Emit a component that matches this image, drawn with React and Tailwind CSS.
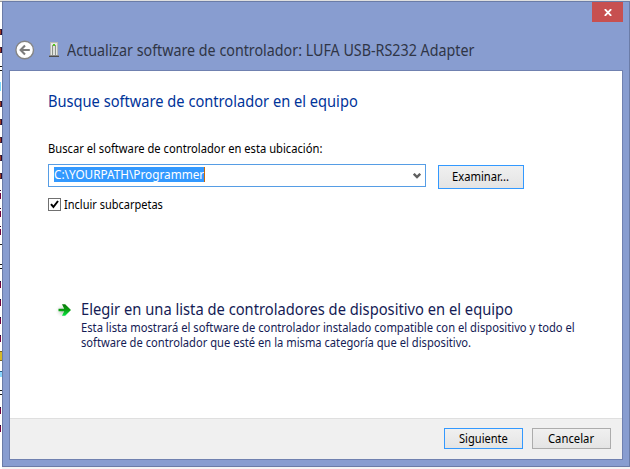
import { useLayoutEffect, useRef, useState } from "react";

// Renders one line of text condensed or stretched to the given width.
function Line({ width, className = "", children }) {
  const ref = useRef(null);
  const [scale, setScale] = useState(1);
  useLayoutEffect(() => {
    if (ref.current) setScale(width / ref.current.offsetWidth);
  }, [width]);
  return (
    <div className={`whitespace-nowrap ${className}`} style={{ width }}>
      <span ref={ref} className="inline-block origin-left" style={{ transform: `scaleX(${scale})` }}>
        {children}
      </span>
    </div>
  );
}

const strip = [
  "d", "d", "e", "c", "d", "d", "d", "d", "d", "i", "i", "i",
  "t", "e", "s", "l", "l", "f", "y", "r", "e", "n", "n",
];

function Mark({ kind }) {
  if (kind === "c") return <div className="h-[9px] w-px bg-[#79d8ff]" />;
  if (kind === "y") return <div className="h-[10px] w-[2px] border-y border-[#7a6420] bg-[#d8b928]" />;
  if (kind === "e") return <div className="h-[5px] w-[2px] border-y border-[#151515]" />;
  if (kind === "t") return <div className="mb-2 h-px w-[2px] bg-[#222222]" />;
  if (kind === "r") return <div className="h-[6px] w-[2px] border-t border-[#236090] bg-[#8bd8ff]" />;
  if (kind === "i")
    return (
      <div className="flex flex-col gap-[2px]">
        <div className="h-px w-px bg-[#35002e]" />
        <div className="h-[6px] w-px bg-[#71003b]" />
      </div>
    );
  if (kind === "d") return <div className="h-[6px] w-[2px] border-y border-l border-y-[#151540] border-l-[#9e3a20] bg-[#2b0a35]" />;
  return <div className="h-[7px] w-px border-t border-[#101040] bg-[#71003b]" />;
}

function Button({ className, width, children }) {
  return (
    <button
      className={`flex justify-center border bg-linear-to-b from-[#f0f0f0] to-[#e4e4e4] text-[12px] leading-[15px] text-black ${className}`}
    >
      <Line width={width}>{children}</Line>
    </button>
  );
}

function BackIcon() {
  return (
    <svg width="20" height="20" viewBox="0 0 20 20" className="shrink-0">
      <circle cx="9.7" cy="10" r="8.8" fill="#fff" stroke="#858585" strokeWidth="1.4" />
      <path d="M14.8 10H6M10 5.6 5.6 10l4.4 4.4" fill="none" stroke="#7c7c7c" strokeWidth="2.1" />
    </svg>
  );
}

function DeviceIcon() {
  return (
    <svg width="10" height="15" viewBox="0 0 10 15" className="shrink-0" shapeRendering="crispEdges">
      <path d="M1 0h8v14H1z" fill="#b9bbb7" />
      <path d="M2 1h6v12H2z" fill="#e6e8e3" />
      <path d="M3 3h1v10H3zM6 3h1v10H6z" fill="#8e938b" />
      <path d="M4 4h2v8H4z" fill="#dfe2dc" />
      <path d="M4 2h2v2H4z" fill="#54c51b" />
      <path d="M0 13h10v1H0z" fill="#8a8a8a" />
      <path d="M0 14h10v1H0z" fill="#4c4c4c" />
    </svg>
  );
}

function GoIcon() {
  return (
    <svg width="18" height="16" viewBox="0 0 18 16" className="shrink-0">
      <defs>
        <linearGradient id="go" x1="0" y1="0" x2="0" y2="1">
          <stop offset="0" stopColor="#087a08" />
          <stop offset=".5" stopColor="#0a9e12" />
          <stop offset="1" stopColor="#08e845" />
        </linearGradient>
        <radialGradient id="glow">
          <stop offset="0" stopColor="#9aa59a" stopOpacity=".75" />
          <stop offset="1" stopColor="#fff" stopOpacity="0" />
        </radialGradient>
      </defs>
      <ellipse cx="7.5" cy="9" rx="8" ry="7.5" fill="url(#glow)" />
      <path d="M3.5 6.8h5.7L7 2.3h3.2L16 8l-5.8 5.7H7l2.2-4.4H3.5z" fill="url(#go)" />
    </svg>
  );
}

export default function App() {
  return (
    <div className="flex h-[469px] w-[630px] overflow-hidden border-t border-[#dfdfdf] bg-[#f4f4f4] font-['Noto_Sans','Open_Sans',sans-serif]">
      <div className="flex w-[2px] shrink-0 flex-col overflow-hidden border-t border-[#999] bg-white pt-[21px]">
        {strip.map((kind, i) => (
          <div key={i} className="flex h-[18px] shrink-0 items-center">
            <Mark kind={kind} />
          </div>
        ))}
      </div>
      <div className="flex h-[466px] w-[628px] shrink-0 flex-col border border-[#6b7ca7] bg-[#889dd0]">
        <div className="flex h-5 justify-end pr-[6px]">
          <button className="flex h-5 w-[31px] items-center justify-center bg-[#c75050]">
            <svg width="8" height="7" viewBox="0 0 8 7">
              <path d="M.8.2 7.2 6.8M7.2.2.8 6.8" stroke="#fff" strokeWidth="1.9" />
            </svg>
          </button>
        </div>
        <div className="flex h-12 items-start pt-[18px] pl-3">
          <BackIcon />
          <div className="pt-[2px] pl-[14px]">
            <DeviceIcon />
          </div>
          <Line width={407} className="ml-2 text-[16px] leading-5 text-[#2f3546]">
            Actualizar software de controlador: LUFA USB-RS232 Adapter
          </Line>
        </div>
        <div className="ml-[6px] flex h-[390px] w-[614px] flex-col border border-[#7081b0] bg-white">
          <div className="flex grow flex-col pt-5 pl-[38px] text-[12px] leading-[15px] text-black">
            <Line width={310} className="text-[16px] leading-5 text-[#003399]">
              Busque software de controlador en el equipo
            </Line>
            <Line width={274} className="mt-[30px]">
              Buscar el software de controlador en esta ubicación:
            </Line>
            <div className="mt-2 flex h-[25px] items-start gap-3">
              <div className="flex h-[23px] w-[378px] items-start justify-between border border-[#569de5] bg-white pt-[2px] pr-1 pl-[5px]">
                <div className="h-[15px] border-r border-[#c9680a] bg-[#3399ff] text-[#ffffff]">
                  <Line width={150}>C:\YOURPATH\Programmer</Line>
                </div>
                <svg width="8" height="7" viewBox="0 0 8 7" className="mt-[6px]">
                  <path d="M.8.8 4 4l3.2-3.2" fill="none" stroke="#606060" strokeWidth="2.4" />
                </svg>
              </div>
              <Button className="mt-px h-6 w-[86px] border-[#3399ff] pt-[3px] pr-px" width={57}>
                Examinar...
              </Button>
            </div>
            <div className="mt-2 flex h-[15px] gap-[3px]">
              <div className="mt-px flex size-[13px] items-center justify-center border border-[#707070] bg-white">
                <svg width="9" height="9" viewBox="0 0 9 9">
                  <path d="M1 4.2 3.4 7 8 1" fill="none" stroke="#000" strokeWidth="2" />
                </svg>
              </div>
              <Line width={99}>Incluir subcarpetas</Line>
            </div>
            <div className="mt-[87px] flex pl-[7px] text-[#151c55]">
              <div className="w-[26px] pt-[3px]">
                <GoIcon />
              </div>
              <div className="flex flex-col">
                <Line width={432} className="text-[16px] leading-5">
                  Elegir en una lista de controladores de dispositivo en el equipo
                </Line>
                <Line width={494} className="mt-px">
                  Esta lista mostrará el software de controlador instalado compatible con el dispositivo y todo el
                </Line>
                <Line width={390}>software de controlador que esté en la misma categoría que el dispositivo.</Line>
              </div>
            </div>
          </div>
          <div className="flex h-[41px] shrink-0 items-start justify-end gap-[9px] border-t border-[#dfdfdf] bg-[#f0f0f0] pt-[9px] pr-[11px]">
            <Button className="h-[21px] w-[79px] border-[#3399ff] pt-[2px]" width={49}>
              Siguiente
            </Button>
            <Button className="h-[21px] w-[79px] border-[#acacac] pt-[2px] pr-px" width={46}>
              Cancelar
            </Button>
          </div>
        </div>
      </div>
    </div>
  );
}
